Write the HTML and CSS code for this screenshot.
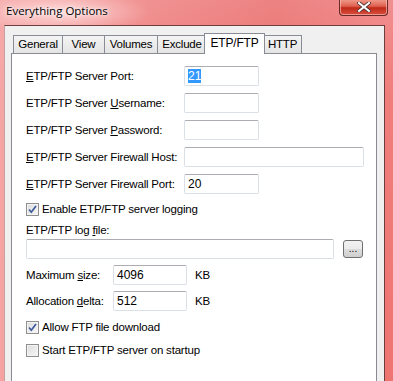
FILE: index.html
```html
<!DOCTYPE html>
<html lang="en">
<head>
  <meta charset="UTF-8" />
  <title>Everything Options</title>
  <link rel="stylesheet" href="styles.css">
</head>
<body>
  <div class="window">
    <div class="titlebar">
      <span class="title">Everything Options</span>
      <span class="close">
        <svg width="14" height="10" viewBox="0 0 14 10">
          <path d="M2 1 L12 9 M12 1 L2 9" stroke="#4a3030" stroke-width="3.6" stroke-linecap="square"/>
          <path d="M2 1 L12 9 M12 1 L2 9" stroke="#ffffff" stroke-width="2" stroke-linecap="square"/>
        </svg>
      </span>
    </div>

    <div class="client">
      <div class="tabs">
        <div class="tab w-general">General</div>
        <div class="tab w-view">View</div>
        <div class="tab w-volumes">Volumes</div>
        <div class="tab w-exclude">Exclude</div>
        <div class="tab active">ETP/FTP</div>
        <div class="tab w-http">HTTP</div>
      </div>

      <div class="panel">
        <!-- server settings -->
        <div class="fields">
          <span class="lbl"><u>E</u>TP/FTP Server Port:</span>
          <div class="edit short"><span class="sel">21</span></div>
          <span class="lbl">ETP/FTP Server <u>U</u>sername:</span>
          <div class="edit short"></div>
          <span class="lbl">ETP/FTP Server <u>P</u>assword:</span>
          <div class="edit short"></div>
          <span class="lbl"><u>E</u>TP/FTP Server Firewall Host:</span>
          <div class="edit host"></div>
          <span class="lbl"><u>E</u>TP/FTP Server Firewall Port:</span>
          <div class="edit short">20</div>
        </div>

        <div class="check first">
          <span class="box"><svg width="11" height="11" viewBox="0 0 11 11"><path d="M2 5.5 L4.3 8.2 L9 2" fill="none" stroke="#3c5a9a" stroke-width="1.7"/></svg></span>
          Enable ETP/FTP server logging
        </div>

        <div class="lbl log">ETP/FTP log <u>f</u>ile:</div>
        <div class="file-row">
          <div class="edit file"></div>
          <button class="browse">...</button>
        </div>

        <div class="size-row">
          <span class="lbl size-lbl">Maximum <u>s</u>ize:</span>
          <div class="edit num">4096</div>
          <span class="lbl">KB</span>
        </div>
        <div class="size-row">
          <span class="lbl size-lbl">Allocation <u>d</u>elta:</span>
          <div class="edit num">512</div>
          <span class="lbl">KB</span>
        </div>

        <div class="check allow">
          <span class="box"><svg width="11" height="11" viewBox="0 0 11 11"><path d="M2 5.5 L4.3 8.2 L9 2" fill="none" stroke="#3c5a9a" stroke-width="1.7"/></svg></span>
          Allow FTP file download
        </div>
        <div class="check">
          <span class="box"></span>
          Start ETP/FTP server on startup
        </div>
      </div>
    </div>
  </div>
</body>
</html>
```

FILE: styles.css
```css
body {
  margin: 0;
  font-family: "Liberation Sans", Arial, sans-serif;
  font-size: 11.5px;
  letter-spacing: -0.2px;
  color: #000;
}

.window {
  width: 393px;
  height: 381px;
  overflow: hidden;
  background:
    radial-gradient(ellipse 90px 22px at 60px 12px, rgba(255,225,225,0.85), rgba(255,225,225,0) 100%),
    linear-gradient(90deg, rgba(246,170,170,0.9) 0%, rgba(238,130,130,0.5) 40%, rgba(228,88,88,0.4) 70%, rgba(240,130,130,0.6) 100%),
    linear-gradient(#f2a0a0 0%, #ee7a72 25%, #ec6258 100%);
}

.titlebar {
  height: 25px;
  display: flex;
  justify-content: space-between;
  align-items: flex-start;
}

.title {
  font-family: "Open Sans", "Liberation Sans", sans-serif;
  font-size: 11.5px;
  letter-spacing: 0;
  margin: 3px 0 0 6px;
  text-shadow: 0 0 6px #fff, 0 0 3px #fff;
}

.close {
  width: 47px;
  height: 16px;
  margin: -1px 5px 0 0;
  border: 1px solid #6a2a2a;
  border-top: none;
  border-radius: 0 0 4px 4px;
  background: linear-gradient(#f0a090 0%, #e06050 45%, #c02a18 55%, #d85040 100%);
  box-shadow: inset 0 0 0 1px rgba(255,200,190,0.6);
  display: flex;
  justify-content: center;
  align-items: center;
}

.client {
  margin: 0 8px 0 4px;
  height: 400px;
  background: #f0f0f0;
  border: 1px solid #6e3e3e;
  border-left-color: #c8a0a0;
  border-bottom: none;
  padding: 7px 7px 0 6px;
}

.tabs {
  display: flex;
  align-items: flex-end;
  height: 20px;
  padding-left: 2px;
}

.tab {
  height: 17px;
  line-height: 17px;
  border: 1px solid #898c95;
  border-bottom: none;
  margin-right: -1px;
  background: linear-gradient(#f4f4f4, #e4e4e4);
  text-align: center;
  box-sizing: content-box;
}

.w-general { width: 48px; }
.w-view { width: 41px; }
.w-volumes { width: 52px; }
.w-exclude { width: 48px; }
.w-http { width: 37px; margin-left: -1px; }

.tab.active {
  position: relative;
  z-index: 1;
  width: 59px;
  height: 20px;
  line-height: 18px;
  font-size: 12px;
  margin: 0 -1px -1px -2px;
  background: #fff;
}

.panel {
  background: #fff;
  border: 1px solid #898c95;
  height: 360px;
  padding: 12px 0 0 14px;
}

.fields {
  display: grid;
  grid-template-columns: 158px auto;
  row-gap: 7px;
  align-items: center;
}

.lbl {
  white-space: nowrap;
}

.edit {
  height: 20px;
  box-sizing: border-box;
  border: 1px solid #dbdfe6;
  border-top-color: #abadb3;
  border-radius: 2px;
  padding: 0 0 0 3px;
  line-height: 18px;
  font-size: 12px;
  letter-spacing: 0;
}

.short { width: 75px; }
.host { width: 180px; }

.sel {
  background: #3399ff;
  color: #fff;
}

.check {
  display: flex;
  align-items: center;
  height: 14px;
  gap: 3px;
}

.check.first { margin-top: 8px; }
.check.allow { margin-top: 9px; margin-bottom: 9px; }

.box {
  width: 11px;
  height: 11px;
  border: 1px solid #8f8f8f;
  background: linear-gradient(135deg, #dcdcdc, #f8f8f8);
  box-shadow: inset 0 0 0 1px #f4f4f4;
  display: flex;
}

.log {
  margin-top: 8px;
}

.file-row {
  display: flex;
  align-items: center;
  gap: 9px;
  margin-top: 3px;
}

.file { width: 308px; }

.browse {
  width: 20px;
  height: 18px;
  padding: 0;
  font-family: inherit;
  font-size: 10px;
  line-height: 12px;
  border: 1px solid #707070;
  border-radius: 3px;
  background: linear-gradient(#f2f2f2 0%, #ebebeb 50%, #dddddd 51%, #cfcfcf 100%);
}

.size-row {
  display: flex;
  align-items: center;
  margin-top: 6px;
}

.size-lbl { width: 87px; }

.num {
  width: 74px;
  margin-right: 8px;
}
```
